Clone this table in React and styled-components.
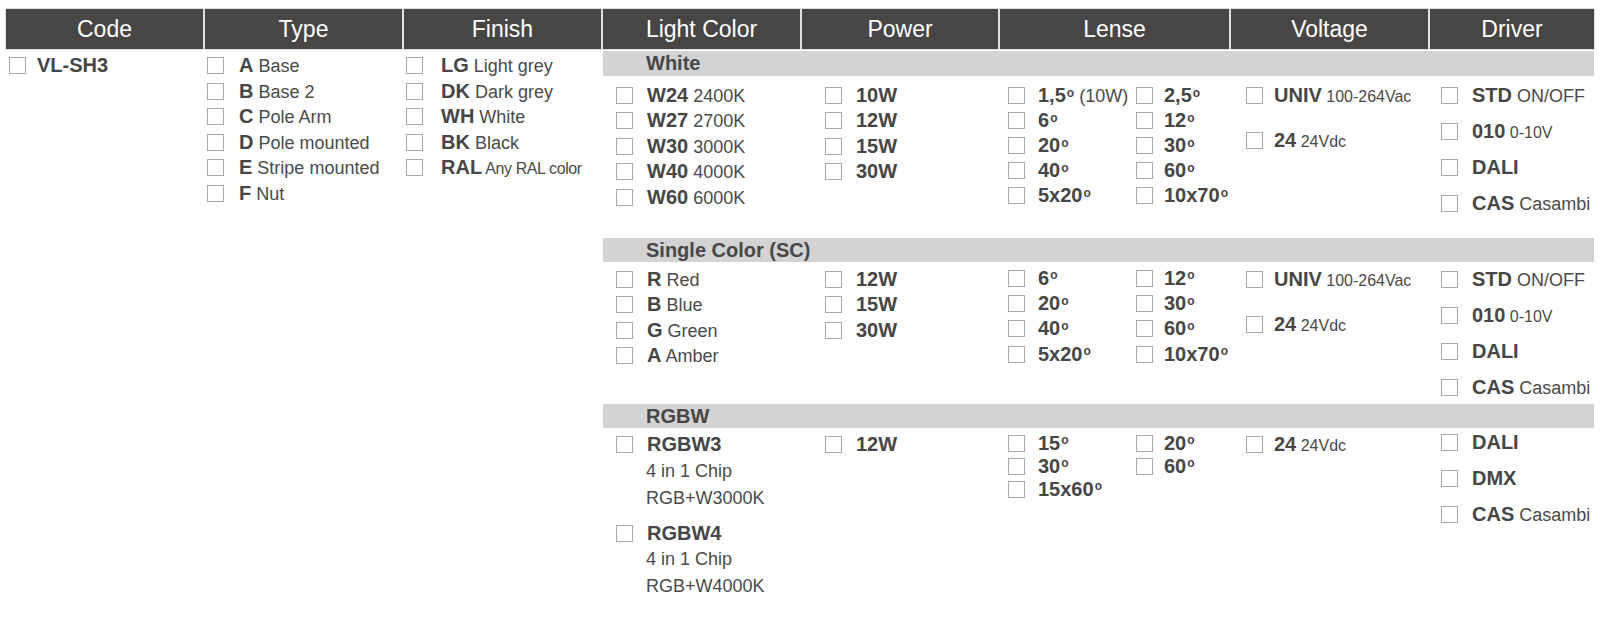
import styled, { createGlobalStyle } from "styled-components";

const GlobalStyle = createGlobalStyle`
  body {
    margin: 0;
    background: #fff;
    font-family: "Liberation Sans", Arial, sans-serif;
    color: #4a4a4a;
    overflow: hidden;
  }
`;

const Table = styled.div`
  display: grid;
  grid-template-columns: 197px 197px 197px 197px 196px 229px 197px 164px;
  grid-template-rows: 40px 27px 162px 24px 142px 24px 190px;
  column-gap: 2px;
  width: 1588px;
  padding: 9px 0 0 6px;
`;

const Head = styled.div`
  grid-row: 1;
  background: #474645;
  box-shadow: 0 0 0 1px #e0e0e0;
  color: #fff;
  font-size: 23px;
  display: flex;
  align-items: center;
  justify-content: center;
`;

const LeftCol = styled.div`
  grid-column: ${p => p.$col};
  grid-row: 2 / -1;
  padding: 4px 0 0 ${p => p.$pl}px;
`;

const Band = styled.div`
  grid-column: 4 / -1;
  grid-row: ${p => p.$row};
  margin-top: ${p => p.$mt || 0}px;
  background: #d3d3d3;
  display: flex;
  align-items: center;
  padding-left: 43px;
  font-size: 20px;
  font-weight: 700;
  color: #474747;
`;

const Cell = styled.div`
  grid-row: ${p => p.$row};
  display: flex;
  flex-direction: column;
  gap: ${p => p.$gap || 0}px;
  padding: ${p => p.$pt}px 0 0 ${p => p.$pl}px;
`;

const LenseGrid = styled.div`
  grid-row: ${p => p.$row};
  display: grid;
  grid-template-columns: 128px auto;
  grid-auto-rows: ${p => p.$h}px;
  padding: ${p => p.$pt}px 0 0 8px;
`;

const Opt = styled.div`
  display: flex;
  align-items: center;
  height: ${p => p.$h || 25.5}px;
  margin-top: ${p => p.$mt || 0}px;
  white-space: nowrap;
`;

const Box = styled.span`
  width: 17px;
  height: 17px;
  box-sizing: border-box;
  border: 1px solid #a9a9a9;
  background: #fff;
  flex-shrink: 0;
`;

const Key = styled.span`
  margin-left: ${p => p.$gap ?? 14}px;
  font-size: 20px;
  font-weight: 700;
  color: #464646;
`;

const Desc = styled.span`
  font-size: ${p => p.$size || 18}px;
  letter-spacing: ${p => p.$ls || 0}px;
  font-weight: 400;
  color: #4a4a4a;
`;

const Deg = styled.span`
  font-size: 0.6em;
  vertical-align: 0.45em;
  margin-left: 1px;
`;

const Sub = styled.div`
  height: 27px;
  display: flex;
  align-items: center;
  padding-left: 30px;
  font-size: 18px;
`;

const Option = ({ k, d, gap, size, ls, h, mt, deg }) => (
  <Opt $h={h} $mt={mt}>
    <Box />
    <Key $gap={gap}>
      {k}
      {deg && <Deg>o</Deg>}
      {d && <Desc $size={size} $ls={ls}> {d}</Desc>}
    </Key>
  </Opt>
);

const heads = ["Code", "Type", "Finish", "Light Color", "Power", "Lense", "Voltage", "Driver"];

const types = [["A", "Base"], ["B", "Base 2"], ["C", "Pole Arm"], ["D", "Pole mounted"], ["E", "Stripe mounted"], ["F", "Nut"]];
const finishes = [["LG", "Light grey"], ["DK", "Dark grey"], ["WH", "White"], ["BK", "Black"]];

const Lense = ({ row, pt, h, items }) => (
  <LenseGrid $row={row} $pt={pt} $h={h}>
    {items.map((it, i) => (
      <Option key={i} k={it[0]} d={it[1]} size={18} deg h={h} gap={i % 2 ? 11 : 13} />
    ))}
  </LenseGrid>
);

const Voltage = ({ row, pt, items }) => (
  <Cell $row={row} $pt={pt} $pl={15} $gap={19.5}>
    {items.map(([k, d]) => <Option key={k} k={k} d={d} size={16} gap={11} />)}
  </Cell>
);

const Driver = ({ row, pt, items }) => (
  <Cell $row={row} $pt={pt} $pl={11} $gap={10.5}>
    {items.map(([k, d, s]) => <Option key={k} k={k} d={d} size={s} />)}
  </Cell>
);

const chip = (k, sub, mt) => (
  <>
    <Option k={k} mt={mt} />
    <Sub>4 in 1 Chip</Sub>
    <Sub>{sub}</Sub>
  </>
);

export default function App() {
  return (
    <>
      <GlobalStyle />
      <Table>
        {heads.map(h => <Head key={h}>{h}</Head>)}

        <LeftCol $col={1} $pl={3}>
          <Option k="VL-SH3" gap={11} />
        </LeftCol>
        <LeftCol $col={2} $pl={2}>
          {types.map(([k, d]) => <Option key={k} k={k} d={d} gap={15} />)}
        </LeftCol>
        <LeftCol $col={3} $pl={2}>
          {finishes.map(([k, d]) => <Option key={k} k={k} d={d} gap={18} />)}
          <Option k="RAL" d="Any RAL color" gap={18} size={16} ls={-0.4} />
        </LeftCol>

        {/* White */}
        <Band $row={2} $mt={2}>White</Band>
        <Cell $row={3} $pt={6.5} $pl={13}>
          {[["W24", "2400K"], ["W27", "2700K"], ["W30", "3000K"], ["W40", "4000K"], ["W60", "6000K"]].map(([k, d]) => (
            <Option key={k} k={k} d={d} />
          ))}
        </Cell>
        <Cell $row={3} $pt={6.5} $pl={23}>
          {["10W", "12W", "15W", "30W"].map(k => <Option key={k} k={k} />)}
        </Cell>
        <Lense row={3} pt={7} h={25} items={[["1,5", "(10W)"], ["2,5"], ["6"], ["12"], ["20"], ["30"], ["40"], ["60"], ["5x20"], ["10x70"]]} />
        <Voltage row={3} pt={6.5} items={[["UNIV", "100-264Vac"], ["24", "24Vdc"]]} />
        <Driver row={3} pt={6.5} items={[["STD", "ON/OFF"], ["010", "0-10V", 16], ["DALI"], ["CAS", "Casambi"]]} />

        {/* Single Color */}
        <Band $row={4}>Single Color (SC)</Band>
        <Cell $row={5} $pt={4.5} $pl={13}>
          {[["R", "Red"], ["B", "Blue"], ["G", "Green"], ["A", "Amber"]].map(([k, d]) => (
            <Option key={k} k={k} d={d} />
          ))}
        </Cell>
        <Cell $row={5} $pt={4.5} $pl={23}>
          {["12W", "15W", "30W"].map(k => <Option key={k} k={k} />)}
        </Cell>
        <Lense row={5} pt={3.5} h={25.3} items={[["6"], ["12"], ["20"], ["30"], ["40"], ["60"], ["5x20"], ["10x70"]]} />
        <Voltage row={5} pt={4.5} items={[["UNIV", "100-264Vac"], ["24", "24Vdc"]]} />
        <Driver row={5} pt={4.5} items={[["STD", "ON/OFF"], ["010", "0-10V", 16], ["DALI"], ["CAS", "Casambi"]]} />

        {/* RGBW */}
        <Band $row={6}>RGBW</Band>
        <Cell $row={7} $pt={4} $pl={13}>
          {chip("RGBW3", "RGB+W3000K")}
          {chip("RGBW4", "RGB+W4000K", 9)}
        </Cell>
        <Cell $row={7} $pt={4} $pl={23}>
          <Option k="12W" />
        </Cell>
        <Lense row={7} pt={3.5} h={23} items={[["15"], ["20"], ["30"], ["60"], ["15x60"]]} />
        <Voltage row={7} pt={3.5} items={[["24", "24Vdc"]]} />
        <Driver row={7} pt={2} items={[["DALI"], ["DMX"], ["CAS", "Casambi"]]} />
      </Table>
    </>
  );
}
